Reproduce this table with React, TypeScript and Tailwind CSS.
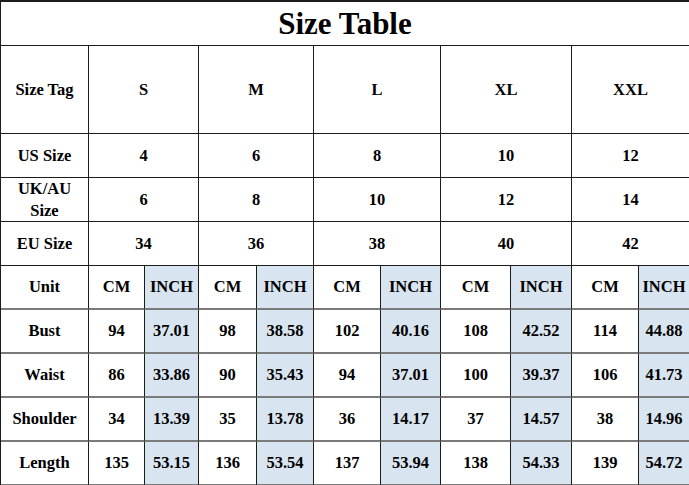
import React from "react";

const font = { fontFamily: '"Liberation Serif", "Times New Roman", serif' };

const sizes = ["S", "M", "L", "XL", "XXL"];
const us = ["4", "6", "8", "10", "12"];
const uk = ["6", "8", "10", "12", "14"];
const eu = ["34", "36", "38", "40", "42"];

const measures: [string, string[]][] = [
  ["Bust", ["94", "37.01", "98", "38.58", "102", "40.16", "108", "42.52", "114", "44.88"]],
  ["Waist", ["86", "33.86", "90", "35.43", "94", "37.01", "100", "39.37", "106", "41.73"]],
  ["Shoulder", ["34", "13.39", "35", "13.78", "36", "14.17", "37", "14.57", "38", "14.96"]],
  ["Length", ["135", "53.15", "136", "53.54", "137", "53.94", "138", "54.33", "139", "54.72"]],
];

function Cell({
  children,
  className = "",
  grey = false,
  blue = false,
}: {
  children?: React.ReactNode;
  className?: string;
  grey?: boolean;
  blue?: boolean;
}) {
  return (
    <div
      className={
        "flex items-center justify-center text-center border-r border-r-[#1c1c1c] leading-[20px] " +
        (grey ? "border-b-2 border-b-[#7a7a7a] " : "border-b border-b-[#1c1c1c] ") +
        (blue ? "bg-[#d8e5f1] " : "bg-white ") +
        className
      }
    >
      {children}
    </div>
  );
}

export default function App() {
  return (
    <div className="w-[689px] h-[485px] bg-white overflow-hidden" style={font}>
      <div className="grid grid-cols-[88px_56px_54px_58px_57px_67px_60px_70px_61px_67px_51px] grid-rows-[44px_88px_44px_44px_44px_44px_44px_44px_44px_44px] border-t-2 border-l border-[#1c1c1c] text-[16.5px] font-bold text-black">
        <Cell className="col-span-11 text-[31px] pt-[1px]">Size Table</Cell>

        <Cell>Size Tag</Cell>
        {sizes.map((s) => (
          <Cell key={s} className="col-span-2">
            {s}
          </Cell>
        ))}

        <Cell>US Size</Cell>
        {us.map((s, i) => (
          <Cell key={"us" + i} className="col-span-2">
            {s}
          </Cell>
        ))}

        <Cell className="leading-[22px]">
          UK/AU
          <br />
          Size
        </Cell>
        {uk.map((s, i) => (
          <Cell key={"uk" + i} className="col-span-2">
            {s}
          </Cell>
        ))}

        <Cell>EU Size</Cell>
        {eu.map((s, i) => (
          <Cell key={"eu" + i} className="col-span-2">
            {s}
          </Cell>
        ))}

        <Cell grey>Unit</Cell>
        {sizes.map((s) => (
          <React.Fragment key={"u" + s}>
            <Cell grey>CM</Cell>
            <Cell grey blue>
              INCH
            </Cell>
          </React.Fragment>
        ))}

        {measures.map(([name, vals]) => (
          <React.Fragment key={name}>
            <Cell grey>{name}</Cell>
            {vals.map((v, j) => (
              <Cell key={name + j} grey blue={j % 2 === 1}>
                {v}
              </Cell>
            ))}
          </React.Fragment>
        ))}
      </div>
    </div>
  );
}
